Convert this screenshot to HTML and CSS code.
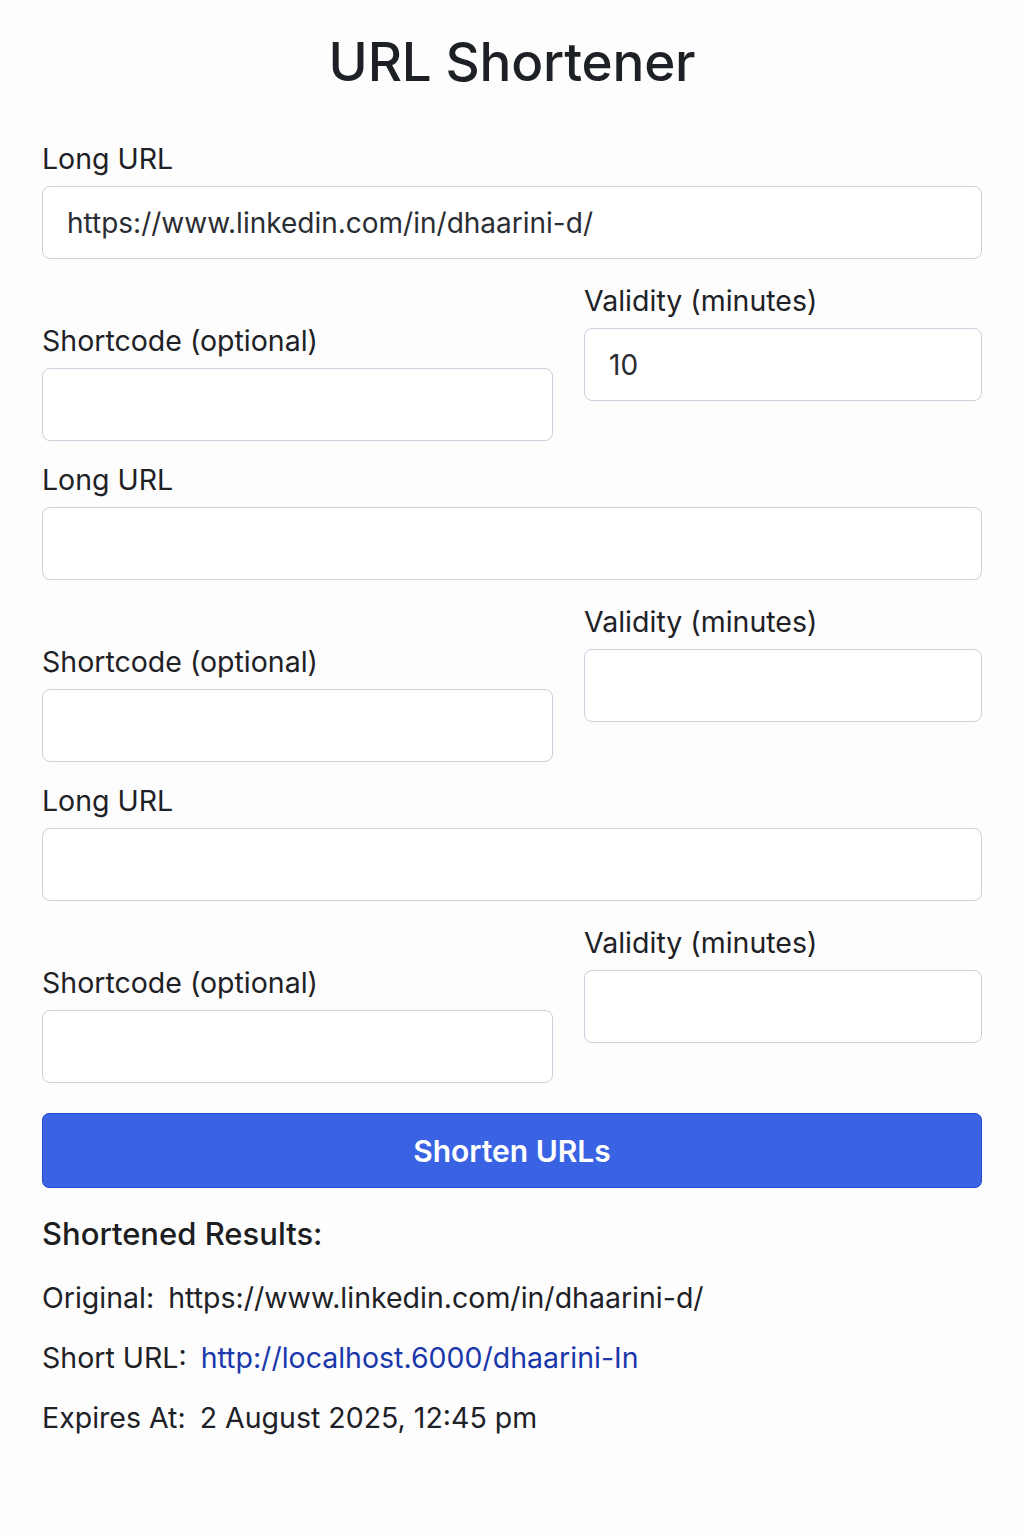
FILE: index.html
```html
<!DOCTYPE html>
<html lang="en">
<head>
<meta charset="utf-8">
<title>URL Shortener</title>
<link rel="stylesheet" href="styles.css">
</head>
<body>
<main class="page">
  <h1 class="title">URL Shortener</h1>
  <form class="form">
    <div class="block">
      <div class="field">
        <label class="label">Long URL</label>
        <input class="input" type="text" value="https://www.linkedin.com/in/dhaarini-d/">
      </div>
      <div class="row">
        <div class="field field-short">
          <label class="label">Shortcode (optional)</label>
          <input class="input" type="text">
        </div>
        <div class="field">
          <label class="label">Validity (minutes)</label>
          <input class="input" type="text" value="10">
        </div>
      </div>
    </div>
    <div class="block">
      <div class="field">
        <label class="label">Long URL</label>
        <input class="input" type="text">
      </div>
      <div class="row">
        <div class="field field-short">
          <label class="label">Shortcode (optional)</label>
          <input class="input" type="text">
        </div>
        <div class="field">
          <label class="label">Validity (minutes)</label>
          <input class="input" type="text">
        </div>
      </div>
    </div>
    <div class="block">
      <div class="field">
        <label class="label">Long URL</label>
        <input class="input" type="text">
      </div>
      <div class="row">
        <div class="field field-short">
          <label class="label">Shortcode (optional)</label>
          <input class="input" type="text">
        </div>
        <div class="field">
          <label class="label">Validity (minutes)</label>
          <input class="input" type="text">
        </div>
      </div>
    </div>
    <button class="button" type="button">Shorten URLs</button>
  </form>
  <section class="results">
    <h2 class="results-title">Shortened Results:</h2>
    <p class="result-line"><span class="key">Original:</span> https://www.linkedin.com/in/dhaarini-d/</p>
    <p class="result-line"><span class="key">Short URL:</span> <a class="link" href="#">http://localhost.6000/dhaarini-In</a></p>
    <p class="result-line"><span class="key">Expires At:</span> 2 August 2025, 12:45 pm</p>
  </section>
</main>
</body>
</html>
```

FILE: styles.css
```css
* { box-sizing: border-box; }

html, body {
  margin: 0;
  padding: 0;
  background: #fdfdfd;
}

body {
  font-family: Inter, "Noto Sans", "Liberation Sans", sans-serif;
  color: #1e2126;
}

.page {
  width: 940px;
  padding: 28px 0 80px;
  margin-left: 42px;
}

.title {
  margin: 0;
  text-align: center;
  font-size: 53px;
  font-weight: 500;
  line-height: 68px;
  letter-spacing: -0.2px;
  color: #1d2025;
}

.form {
  display: flex;
  flex-direction: column;
  margin-top: 46px;
}

.block {
  display: flex;
  flex-direction: column;
  margin-bottom: 22px;
}

.block:last-of-type {
  margin-bottom: 30px;
}

.field {
  display: flex;
  flex-direction: column;
}

.label {
  font-size: 28.5px;
  line-height: 34px;
  margin-bottom: 10px;
  color: #1e2126;
}

.input {
  height: 73px;
  width: 100%;
  border: 1.5px solid #c9d1dd;
  border-radius: 8px;
  background: #ffffff;
  padding: 0 24px;
  font-family: inherit;
  font-size: 28px;
  color: #2a2d33;
  outline: none;
}

.row {
  display: grid;
  grid-template-columns: 511px 398px;
  column-gap: 31px;
  align-items: start;
  margin-top: 25px;
}

.field-short {
  margin-top: 40px;
}

.button {
  height: 75px;
  width: 100%;
  background: #3a63e4;
  border: 1.5px solid #2548d0;
  border-radius: 7px;
  color: #ffffff;
  font-family: inherit;
  font-size: 30px;
  font-weight: 600;
}

.results {
  margin-top: 26px;
}

.results-title {
  margin: 0 0 14px;
  font-size: 31px;
  font-weight: 500;
  line-height: 40px;
  color: #1c1e22;
}

.result-line {
  margin: 0;
  font-size: 28.5px;
  line-height: 60px;
  color: #1e2126;
}

.key {
  margin-right: 6px;
}

.link {
  color: #1a37ab;
  text-decoration: none;
}
```
